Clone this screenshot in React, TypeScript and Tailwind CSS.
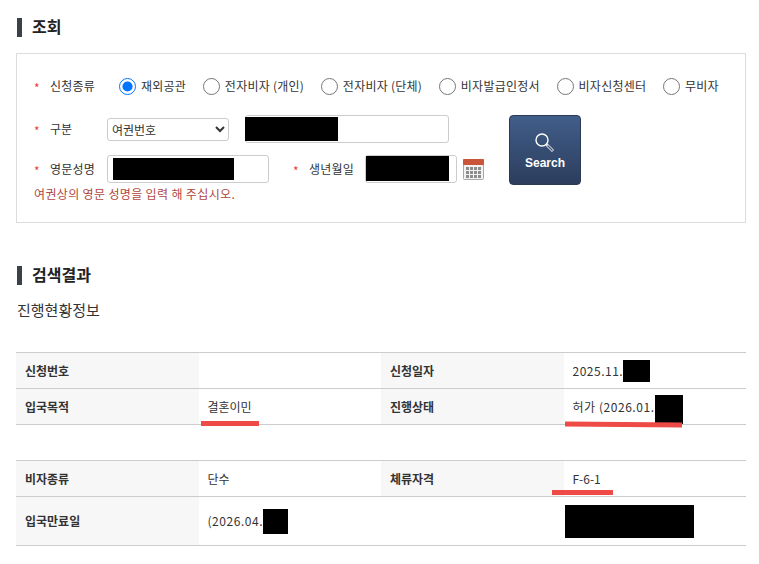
const font = "font-['Noto_Sans_CJK_KR','Liberation_Sans',sans-serif]"

const radioOptions = ["재외공관", "전자비자 (개인)", "전자비자 (단체)", "비자발급인정서", "비자신청센터", "무비자"]

function SectionTitle({ title }: { title: string }) {
  return (
    <div className="flex h-[19px] items-center">
      <div className="h-[19px] w-[5px] bg-[#3b4149]" />
      <h2 className="ml-[10px] pb-[3px] text-[16px] leading-none font-bold text-[#222]">{title}</h2>
    </div>
  )
}

function Star() {
  return <span className="w-[16px] shrink-0 pt-[3px] text-[12px] leading-none text-[#f03c3c]">*</span>
}

function CalendarIcon() {
  return (
    <svg width="21" height="21" viewBox="0 0 21 21" className="ml-[6px] shrink-0">
      <rect x="0.5" y="0.5" width="20" height="20" rx="1" fill="#f2f2f2" stroke="#a8a8a8" />
      <rect x="0" y="0" width="21" height="6" rx="1" fill="#c9553a" />
      {[3, 7, 11, 15].map((x) =>
        [8, 12, 16].map((y) => <rect key={`${x}-${y}`} x={x} y={y} width="3" height="3" fill="#8d8d8d" />),
      )}
    </svg>
  )
}

function SearchButton() {
  return (
    <button className="flex h-[70px] w-[72px] flex-col items-center rounded-[4px] border border-[#2b3a55] bg-gradient-to-b from-[#415e8a] to-[#2c3d5d] pt-[16px]">
      <svg width="21" height="21" viewBox="0 0 21 21" fill="none" stroke="#fff" className="-translate-x-[1px]">
        <circle cx="8" cy="8" r="6" strokeWidth="1.4" />
        <path d="M12.5 12.5 L19 19" strokeWidth="3" stroke="#e8e8e8" />
        <path d="M13.5 13.5 L18.5 18.5" strokeWidth="1.2" stroke="#3a5278" />
      </svg>
      <span className="mt-[1px] font-['Liberation_Sans'] text-[12px] leading-[18px] font-bold text-white">Search</span>
    </button>
  )
}

function SearchForm() {
  return (
    <div className="mt-[16px] h-[170px] w-[730px] border border-[#dcdcdc] pt-[22px] pl-[17px]">
      <div className="flex h-[20px] items-center">
        <Star />
        <span className="w-[69px] shrink-0 text-[12px] tracking-[0.2px] text-[#333]">신청종류</span>
        <div className="flex items-center gap-[16.7px]">
          {radioOptions.map((option, i) => (
            <label key={option} className="flex items-center gap-[5px] text-[12px] tracking-[0.25px] text-[#333]">
              <input type="radio" name="kind" defaultChecked={i === 0} className="h-[17px] w-[17px]" />
              {option}
            </label>
          ))}
        </div>
      </div>
      <div className="mt-[19px] flex">
        <div className="w-[475px] shrink-0">
          <div className="flex h-[28px] items-center">
            <Star />
            <span className="w-[57px] shrink-0 text-[12px] text-[#333]">구분</span>
            <select className="h-[23px] w-[122px] rounded-[3px] border border-[#ccc] bg-white text-[12px] text-[#333]">
              <option>여권번호</option>
            </select>
            <div className="ml-[16px] flex h-[28px] w-[204px] items-center rounded-[3px] border border-[#ccc]">
              <div className="-ml-px h-[24px] w-[93px] bg-black" />
            </div>
          </div>
          <div className="mt-[12px] flex h-[28px] items-center">
            <Star />
            <span className="w-[57px] shrink-0 text-[12px] tracking-[0.2px] text-[#333]">영문성명</span>
            <div className="flex h-[28px] w-[162px] shrink-0 items-center rounded-[3px] border border-[#ccc] pl-[5px]">
              <div className="h-[22px] w-[121px] bg-black" />
            </div>
            <div className="ml-[24px] w-[16px] shrink-0">
              <Star />
            </div>
            <span className="w-[56px] shrink-0 text-[12px] tracking-[0.2px] text-[#333]">생년월일</span>
            <div className="flex h-[28px] w-[92px] shrink-0 items-start rounded-[3px] border border-[#ccc]">
              <div className="h-[25px] w-[83px] bg-black" />
            </div>
            <CalendarIcon />
          </div>
          <p className="mt-[1px] text-[12px] leading-[20px] tracking-[0.35px] text-[#b0483e]">
            여권상의 영문 성명을 입력 해 주십시오.
          </p>
        </div>
        <SearchButton />
      </div>
    </div>
  )
}

function Label({ children }: { children: React.ReactNode }) {
  return <div className="flex items-center bg-[#f7f7f7] pl-[9px] text-[12px] font-bold text-[#333]">{children}</div>
}

function Value({ children }: { children?: React.ReactNode }) {
  return <div className="relative flex items-center pl-[9px] text-[12px] text-[#333]">{children}</div>
}

function Row({ tall, children }: { tall?: boolean; children: React.ReactNode }) {
  return (
    <div className={`grid grid-cols-4 border-b border-[#ccc] ${tall ? "h-[49px]" : "h-[36px]"}`}>{children}</div>
  )
}

// red pen marks drawn over the screenshot
function Mark({ className }: { className: string }) {
  return <div className={`absolute h-[5px] bg-[#ee4b47] ${className}`} />
}

function ResultTables() {
  return (
    <>
      <div className="mt-[30px] w-[730px] border-t border-[#ccc]">
        <Row>
          <Label>신청번호</Label>
          <Value />
          <Label>신청일자</Label>
          <Value>
            <span className="tracking-[0.5px]">2025.11.</span>
            <span className="h-[22px] w-[27px] bg-black" />
          </Value>
        </Row>
        <Row>
          <Label>입국목적</Label>
          <Value>
            결혼이민
            <Mark className="top-[32px] left-[2px] w-[58px]" />
          </Value>
          <Label>진행상태</Label>
          <Value>
            <span className="tracking-[0.55px]">허가 (2026.01.</span>
            <span className="mt-[6px] h-[29px] w-[28px] bg-black" />
            <Mark className="top-[33px] left-[1px] w-[117px] rotate-[0.5deg]" />
          </Value>
        </Row>
      </div>
      <div className="mt-[35px] w-[730px] border-t border-[#ccc]">
        <Row>
          <Label>비자종류</Label>
          <Value>단수</Value>
          <Label>체류자격</Label>
          <Value>
            F-6-1
            <Mark className="top-[29px] left-[-12px] w-[61px]" />
          </Value>
        </Row>
        <Row tall>
          <Label>입국만료일</Label>
          <Value>
            <span className="tracking-[0.55px]">(2026.04.</span>
            <span className="h-[25px] w-[25px] bg-black" />
          </Value>
          <div />
          <div className="flex items-center pl-[1px]">
            <div className="h-[33px] w-[129px] bg-black" />
          </div>
        </Row>
      </div>
    </>
  )
}

export default function App() {
  return (
    <div className={`h-[564px] w-[759px] overflow-hidden bg-white pt-[18px] pl-[16px] ${font}`}>
      <div className="pl-[1px]">
        <SectionTitle title="조회" />
      </div>
      <SearchForm />
      <div className="mt-[43px] pl-[1px]">
        <SectionTitle title="검색결과" />
        <h3 className="mt-[13px] text-[15px] leading-[24px] text-[#333]">진행현황정보</h3>
      </div>
      <ResultTables />
    </div>
  )
}
